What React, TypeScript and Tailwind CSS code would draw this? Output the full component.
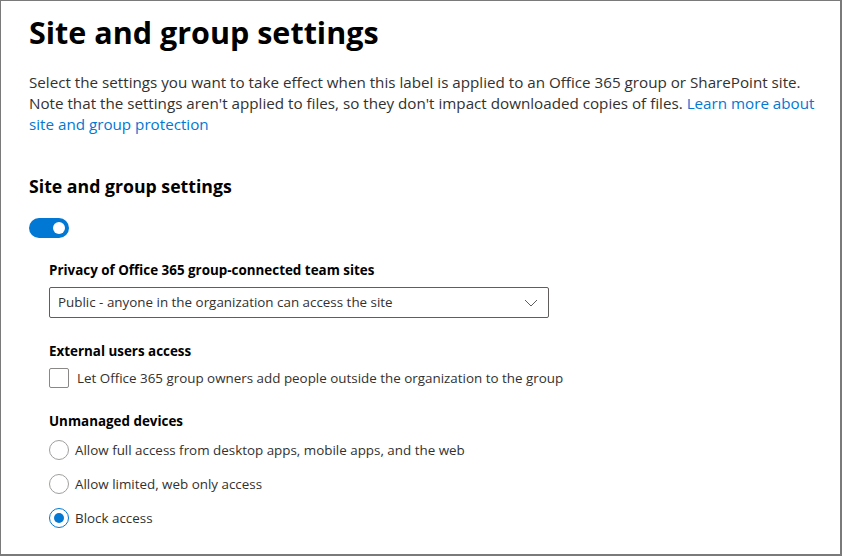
import React from "react";

const font = { fontFamily: '"Open Sans", "Noto Sans", Arial, sans-serif' };

function Radio({ checked, label }: { checked?: boolean; label: string }) {
  return (
    <div className="flex items-center h-[20px] gap-[6px]">
      {checked ? (
        <span className="w-[20px] h-[20px] rounded-full border border-[#0078d4] flex items-center justify-center box-border">
          <span className="w-[10px] h-[10px] rounded-full bg-[#0078d4]" />
        </span>
      ) : (
        <span className="w-[20px] h-[20px] rounded-full border border-[#a19f9d] box-border" />
      )}
      <span className="text-[13.4px] text-[#323130] leading-[20px]">{label}</span>
    </div>
  );
}

export default function App() {
  return (
    <div
      className="w-[842px] h-[556px] box-border border-l border-t border-r-2 border-b-2 border-[#7a7a7a] bg-white overflow-hidden"
      style={font}
    >
      <div className="pl-[28px] pr-[20px] pt-[13px]">
        <h1 className="text-[30.5px] leading-[36px] font-bold text-black">Site and group settings</h1>
        <p className="mt-[22px] text-[15.2px] leading-[21px] text-[#323130] w-[800px]">
          Select the settings you want to take effect when this label is applied to an Office 365 group or SharePoint site.
          Note that the settings aren't applied to files, so they don't impact downloaded copies of files.{" "}
          <a className="text-[#0078d4]">Learn more about site and group protection</a>
        </p>
        <h2 className="mt-[38px] text-[17.7px] leading-[26px] font-bold text-black">Site and group settings</h2>
        <div className="mt-[19px] w-[40px] h-[20px] rounded-full bg-[#0078d4] flex items-center justify-end pr-[4px]">
          <span className="w-[12px] h-[12px] rounded-full bg-white" />
        </div>
        <div className="pl-[20px]">
          <div className="mt-[22px] text-[13.4px] leading-[20px] font-bold text-black">
            Privacy of Office 365 group-connected team sites
          </div>
          <div className="mt-[7px] w-[500px] h-[31px] border border-[#605e5c] rounded-[2px] flex items-center justify-between pl-[8px] pr-[10px] box-border">
            <span className="text-[13.4px] text-[#323130]">Public - anyone in the organization can access the site</span>
            <svg width="14" height="8" viewBox="0 0 14 8" fill="none">
              <path d="M1 1l6 6 6-6" stroke="#605e5c" strokeWidth="1" />
            </svg>
          </div>
          <div className="mt-[23px] text-[13.4px] leading-[20px] font-bold text-black">External users access</div>
          <div className="mt-[7px] flex items-center gap-[8px] h-[20px]">
            <span className="w-[20px] h-[20px] rounded-[2px] border border-[#8a8886] box-border" />
            <span className="text-[13.4px] text-[#323130]">
              Let Office 365 group owners add people outside the organization to the group
            </span>
          </div>
          <div className="mt-[23px] text-[13.4px] leading-[20px] font-bold text-black">Unmanaged devices</div>
          <div className="mt-[9px] flex flex-col gap-[14px]">
            <Radio label="Allow full access from desktop apps, mobile apps, and the web" />
            <Radio label="Allow limited, web only access" />
            <Radio checked label="Block access" />
          </div>
        </div>
      </div>
    </div>
  );
}
